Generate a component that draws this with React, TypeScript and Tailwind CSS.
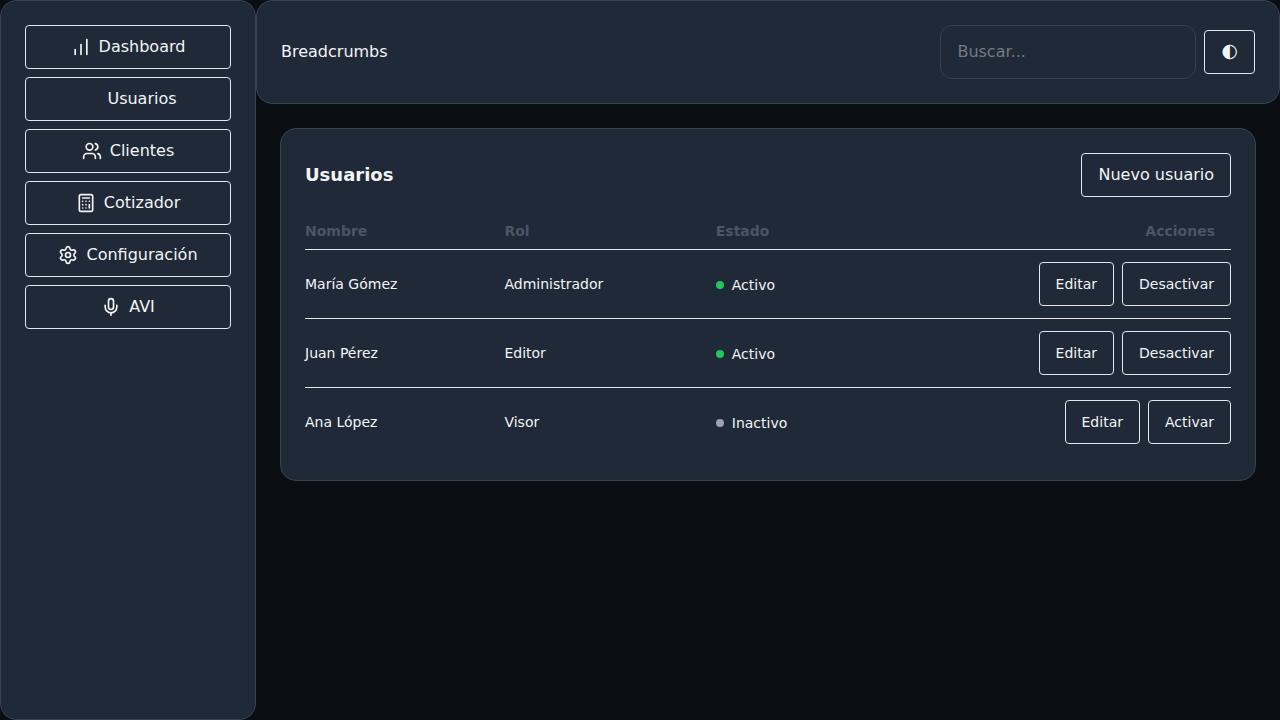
import type { ReactNode } from "react";
import {
  Calculator,
  ChartNoAxesColumnIncreasing,
  Mic,
  Settings,
  Users,
  type LucideIcon,
} from "lucide-react";

type NavItem = { label: string; icon?: LucideIcon };

const navItems: NavItem[] = [
  { label: "Dashboard", icon: ChartNoAxesColumnIncreasing },
  { label: "Usuarios" },
  { label: "Clientes", icon: Users },
  { label: "Cotizador", icon: Calculator },
  { label: "Configuración", icon: Settings },
  { label: "AVI", icon: Mic },
];

const users = [
  { name: "María Gómez", role: "Administrador", active: true },
  { name: "Juan Pérez", role: "Editor", active: true },
  { name: "Ana López", role: "Visor", active: false },
];

function Button({ children, label }: { children: ReactNode; label?: string }) {
  return (
    <button
      type="button"
      aria-label={label}
      className="inline-flex min-h-11 items-center justify-center gap-2 rounded border border-gray-200 px-4 py-2"
    >
      {children}
    </button>
  );
}

function Sidebar() {
  return (
    <aside className="w-64 shrink-0 rounded-2xl border border-gray-700 bg-[#1f2937] p-6">
      <nav className="flex flex-col gap-2">
        {navItems.map(({ label, icon: Icon }) => (
          <Button key={label}>
            {Icon ? <Icon size={20} aria-hidden /> : <span className="size-5" />}
            <span>{label}</span>
          </Button>
        ))}
      </nav>
    </aside>
  );
}

function Header() {
  return (
    <header className="flex items-center justify-between rounded-2xl border border-gray-700 bg-[#1f2937] p-6">
      <div>Breadcrumbs</div>
      <div className="flex items-center gap-2">
        <input
          type="text"
          aria-label="Buscar"
          placeholder="Buscar..."
          className="w-64 rounded-xl border border-gray-700 bg-transparent px-4 py-3.5 placeholder:text-[#757a82]"
        />
        <Button label="Cambiar tema">
          <span>
            <span className="text-[19px] leading-5">◐</span>
          </span>
        </Button>
      </div>
    </header>
  );
}

function UsersTable() {
  return (
    <table className="w-full text-sm">
      <thead>
        <tr className="border-b border-gray-200 text-left text-gray-600">
          <th className="py-2 pr-4">Nombre</th>
          <th className="py-2 pr-4">Rol</th>
          <th className="py-2 pr-4">Estado</th>
          <th className="py-2 pr-4 text-right">Acciones</th>
        </tr>
      </thead>
      <tbody>
        {users.map((user) => (
          <tr key={user.name} className="border-b border-gray-200 last:border-0">
            <td className="py-3 pr-4">{user.name}</td>
            <td className="py-3 pr-4">{user.role}</td>
            <td className="py-3 pr-4">
              <span className="inline-flex items-center gap-2">
                <span
                  className={
                    user.active
                      ? "size-2 rounded-full bg-[#22c55e]"
                      : "size-2 rounded-full bg-[#9ca3af]"
                  }
                />
                {user.active ? "Activo" : "Inactivo"}
              </span>
            </td>
            <td className="py-3">
              <div className="flex justify-end gap-2">
                <Button>Editar</Button>
                <Button>{user.active ? "Desactivar" : "Activar"}</Button>
              </div>
            </td>
          </tr>
        ))}
      </tbody>
    </table>
  );
}

export default function App() {
  return (
    <div className="flex min-h-screen bg-[#0b0f14] font-['DejaVu_Sans',sans-serif] text-gray-100">
      <Sidebar />
      <div className="min-w-0 flex-1">
        <Header />
        <main className="p-6">
          <section className="rounded-2xl border border-gray-700 bg-[#1f2937] p-6">
            <div className="mb-4 flex items-center justify-between">
              <h1 className="text-lg font-semibold">Usuarios</h1>
              <Button>Nuevo usuario</Button>
            </div>
            <UsersTable />
          </section>
        </main>
      </div>
    </div>
  );
}
